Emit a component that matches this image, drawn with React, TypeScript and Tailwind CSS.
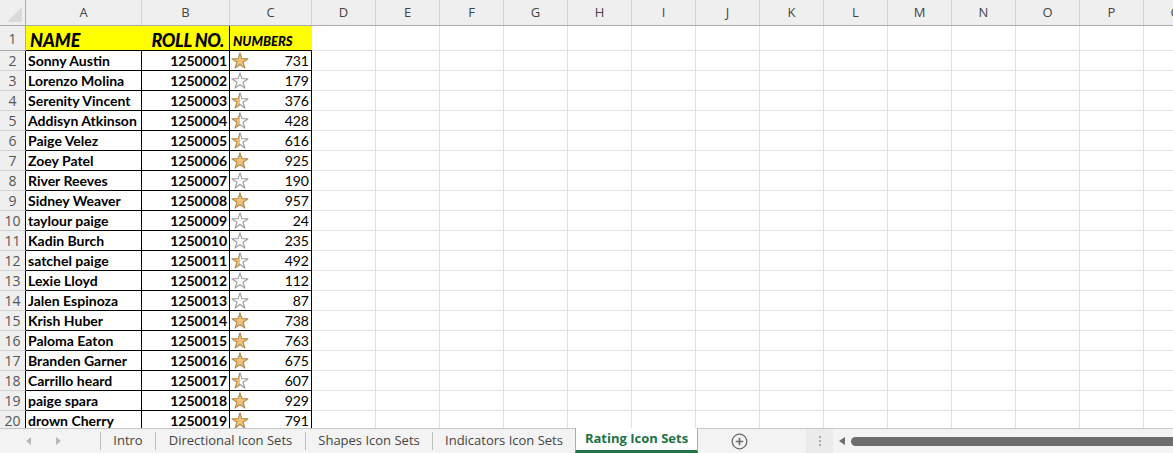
import React from 'react';

type Row = { name: string; roll: number; num: number };

const rows: Row[] = [
  { name: 'Sonny Austin', roll: 1250001, num: 731 },
  { name: 'Lorenzo Molina', roll: 1250002, num: 179 },
  { name: 'Serenity Vincent', roll: 1250003, num: 376 },
  { name: 'Addisyn Atkinson', roll: 1250004, num: 428 },
  { name: 'Paige Velez', roll: 1250005, num: 616 },
  { name: 'Zoey Patel', roll: 1250006, num: 925 },
  { name: 'River Reeves', roll: 1250007, num: 190 },
  { name: 'Sidney Weaver', roll: 1250008, num: 957 },
  { name: 'taylour paige', roll: 1250009, num: 24 },
  { name: 'Kadin Burch', roll: 1250010, num: 235 },
  { name: 'satchel paige', roll: 1250011, num: 492 },
  { name: 'Lexie Lloyd', roll: 1250012, num: 112 },
  { name: 'Jalen Espinoza', roll: 1250013, num: 87 },
  { name: 'Krish Huber', roll: 1250014, num: 738 },
  { name: 'Paloma Eaton', roll: 1250015, num: 763 },
  { name: 'Branden Garner', roll: 1250016, num: 675 },
  { name: 'Carrillo heard', roll: 1250017, num: 607 },
  { name: 'paige spara', roll: 1250018, num: 929 },
  { name: 'drown Cherry', roll: 1250019, num: 791 },
];

const extraCols = ['D', 'E', 'F', 'G', 'H', 'I', 'J', 'K', 'L', 'M', 'N', 'O', 'P', 'Q', 'R'];

const STAR = '8,0.8 9.69,5.98 15.13,5.98 10.73,9.19 12.41,14.37 8,11.17 3.59,14.37 5.27,9.19 0.87,5.98 6.31,5.98';

// 3 star rating: thresholds at 33% / 67% of min..max
const min = Math.min(...rows.map((r) => r.num));
const max = Math.max(...rows.map((r) => r.num));
function rating(n: number) {
  const p = (n - min) / (max - min);
  if (p >= 0.67) return 'full';
  if (p >= 0.33) return 'half';
  return 'empty';
}

function Star({ kind }: { kind: string }) {
  const fill = kind === 'full' ? '#eec179' : kind === 'half' ? 'url(#halfFill)' : '#ffffff';
  const stroke = kind === 'full' ? '#b48a4c' : kind === 'half' ? 'url(#halfStroke)' : '#9d9d9d';
  return (
    <svg width="18" height="17" viewBox="0 0 16 15.2" className="shrink-0">
      <polygon points={STAR} fill={fill} stroke={stroke} strokeWidth="1" strokeLinejoin="round" />
    </svg>
  );
}

function Defs() {
  return (
    <svg width="0" height="0" className="absolute">
      <defs>
        <linearGradient id="halfFill" x1="0" x2="1" y1="0" y2="0">
          <stop offset="0.5" stopColor="#eec179" />
          <stop offset="0.5" stopColor="#ffffff" />
        </linearGradient>
        <linearGradient id="halfStroke" x1="0" x2="1" y1="0" y2="0">
          <stop offset="0.5" stopColor="#b48a4c" />
          <stop offset="0.5" stopColor="#9d9d9d" />
        </linearGradient>
      </defs>
    </svg>
  );
}

const cellFont = { fontFamily: 'Lato, "Open Sans", sans-serif' };

function EmptyCells({ h }: { h: string }) {
  return (
    <>
      {extraCols.map((c) => (
        <div key={c} className={`w-[64px] shrink-0 ${h} border-r border-b border-[#e1e1e1]`} />
      ))}
    </>
  );
}

export default function App() {
  return (
    <div className="w-[1173px] h-[453px] overflow-hidden bg-white flex flex-col select-none">
      <Defs />
      <div className="h-[428px] overflow-hidden">
        {/* column headers */}
        <div
          className="flex h-[26px] bg-[#efefef] border-b border-[#ababab] text-[13px] text-[#444]"
          style={{ fontFamily: '"Open Sans", "Noto Sans", sans-serif' }}
        >
          <div className="w-[26px] shrink-0 h-full border-r border-[#ababab] relative">
            <div className="absolute bottom-[3px] right-[3px] w-0 h-0 border-l-[15px] border-l-transparent border-b-[15px] border-b-[#d9d9d9]" />
          </div>
          <div className="w-[116px] shrink-0 border-r border-[#d4d4d4] flex items-center justify-center">A</div>
          <div className="w-[88px] shrink-0 border-r border-[#d4d4d4] flex items-center justify-center">B</div>
          <div className="w-[82px] shrink-0 border-r border-[#d4d4d4] flex items-center justify-center">C</div>
          {extraCols.map((c) => (
            <div key={c} className="w-[64px] shrink-0 border-r border-[#d4d4d4] flex items-center justify-center">
              {c}
            </div>
          ))}
        </div>

        {/* row 1 */}
        <div className="flex h-[25px]" style={cellFont}>
          <div
            className="w-[26px] shrink-0 bg-[#efefef] border-r border-b border-[#ababab] flex items-center justify-center text-[14px] text-[#555]"
            style={{ fontFamily: '"Open Sans", sans-serif' }}
          >
            1
          </div>
          <div className="w-[116px] shrink-0 bg-[#ffff00] border-b border-black flex items-end pb-[1px] pl-[4px] text-[18px] font-black italic leading-none">
            NAME
          </div>
          <div className="w-[88px] shrink-0 bg-[#ffff00] border-r border-b border-black flex items-end justify-end pb-[1px] pr-[5px] text-[18px] font-black italic leading-none tracking-[-0.4px]">
            ROLL NO.
          </div>
          <div className="w-[82px] shrink-0 bg-[#ffff00] border-b border-black flex items-end pb-[2px] pl-[3px] text-[13px] font-black italic leading-none">
            NUMBERS
          </div>
          <EmptyCells h="h-[25px]" />
        </div>

        {rows.map((r, i) => (
          <div key={r.roll} className="flex h-[20px]" style={cellFont}>
            <div
              className="w-[26px] shrink-0 bg-[#efefef] border-r border-b border-r-black border-b-[#d4d4d4] flex items-center justify-center text-[14px] text-[#555]"
              style={{ fontFamily: '"Open Sans", sans-serif' }}
            >
              {i + 2}
            </div>
            <div className="w-[116px] shrink-0 border-r border-b border-black flex items-center pl-[2px] text-[14px] font-bold text-black whitespace-nowrap overflow-hidden">
              {r.name}
            </div>
            <div className="w-[88px] shrink-0 border-r border-b border-black flex items-center justify-end pr-[2px] text-[14px] font-bold text-black">
              {r.roll}
            </div>
            <div className="w-[82px] shrink-0 border-r border-b border-black flex items-center pl-[1px] pr-[2px] text-[14px] text-black">
              <Star kind={rating(r.num)} />
              <span className="ml-auto">{r.num}</span>
            </div>
            <EmptyCells h="h-[20px]" />
          </div>
        ))}
      </div>

      {/* sheet tabs */}
      <div
        className="h-[25px] flex items-stretch bg-[#f3f3f3] border-t border-[#c6c6c6] text-[13px] text-[#444]"
        style={{ fontFamily: '"Open Sans", "Noto Sans", sans-serif' }}
      >
        <div className="w-[100px] shrink-0 flex items-center">
          <div className="ml-[26px] w-0 h-0 border-y-[4px] border-y-transparent border-r-[5px] border-r-[#b7b7b7]" />
          <div className="ml-[25px] w-0 h-0 border-y-[4px] border-y-transparent border-l-[5px] border-l-[#b7b7b7]" />
        </div>
        <div className="w-px my-[3px] bg-[#bdbdbd]" />
        <div className="w-[54px] flex items-center justify-center">Intro</div>
        <div className="w-px my-[3px] bg-[#bdbdbd]" />
        <div className="w-[149px] flex items-center justify-center">Directional Icon Sets</div>
        <div className="w-px my-[3px] bg-[#bdbdbd]" />
        <div className="w-[126px] flex items-center justify-center">Shapes Icon Sets</div>
        <div className="w-px my-[3px] bg-[#bdbdbd]" />
        <div className="w-[142px] flex items-center justify-center">Indicators Icon Sets</div>
        <div className="w-[123px] -mt-px bg-white border-x border-[#ababab] border-b-[3px] border-b-[#217346] flex items-center justify-center font-bold text-[#217346]">
          Rating Icon Sets
        </div>
        <div className="w-[108px] flex items-center pl-[33px]">
          <svg width="17" height="17" viewBox="0 0 17 17">
            <circle cx="8.5" cy="8.5" r="7.3" fill="none" stroke="#6b6b6b" strokeWidth="1.3" />
            <path d="M8.5 4.8v7.4M4.8 8.5h7.4" stroke="#6b6b6b" strokeWidth="1.6" />
          </svg>
        </div>
        <div className="w-[27px] bg-[#ebebeb] flex flex-col items-center justify-center gap-[2px]">
          <div className="w-[2px] h-[2px] bg-[#a8a8a8]" />
          <div className="w-[2px] h-[2px] bg-[#a8a8a8]" />
          <div className="w-[2px] h-[2px] bg-[#a8a8a8]" />
        </div>
        <div className="flex-1 flex items-center pl-[6px]">
          <div className="w-0 h-0 border-y-[4px] border-y-transparent border-r-[6px] border-r-[#6d6d6d]" />
          <div className="ml-[6px] flex-1 h-[9px] rounded-l-full bg-[#6d6d6d]" />
        </div>
      </div>
    </div>
  );
}
